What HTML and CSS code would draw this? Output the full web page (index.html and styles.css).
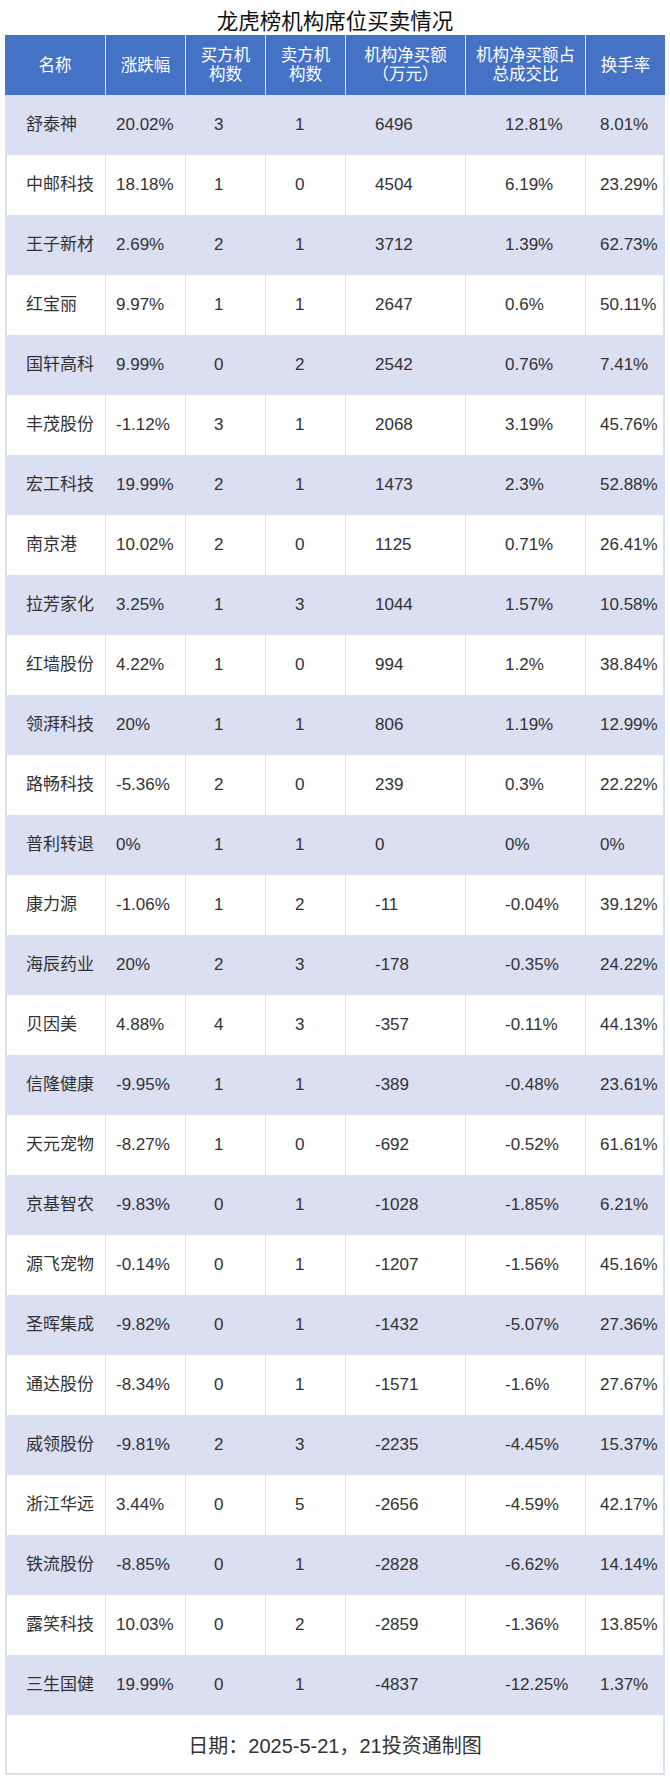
FILE: index.html
```html
<!DOCTYPE html>
<html lang="zh-CN">
<head>
<meta charset="utf-8">
<title>龙虎榜机构席位买卖情况</title>
<link rel="stylesheet" href="styles.css">
</head>
<body>
<div class="sheet">
  <h1 class="title">龙虎榜机构席位买卖情况</h1>
  <table class="grid">
    <thead>
      <tr>
        <th class="c1">名称</th>
        <th class="c2">涨跌幅</th>
        <th class="c3">买方机<br>构数</th>
        <th class="c4">卖方机<br>构数</th>
        <th class="c5">机构净买额<br>（万元）</th>
        <th class="c6">机构净买额占<br>总成交比</th>
        <th class="c7">换手率</th>
      </tr>
    </thead>
    <tbody>
      <tr><td>舒泰神</td><td>20.02%</td><td>3</td><td>1</td><td>6496</td><td>12.81%</td><td>8.01%</td></tr>
      <tr><td>中邮科技</td><td>18.18%</td><td>1</td><td>0</td><td>4504</td><td>6.19%</td><td>23.29%</td></tr>
      <tr><td>王子新材</td><td>2.69%</td><td>2</td><td>1</td><td>3712</td><td>1.39%</td><td>62.73%</td></tr>
      <tr><td>红宝丽</td><td>9.97%</td><td>1</td><td>1</td><td>2647</td><td>0.6%</td><td>50.11%</td></tr>
      <tr><td>国轩高科</td><td>9.99%</td><td>0</td><td>2</td><td>2542</td><td>0.76%</td><td>7.41%</td></tr>
      <tr><td>丰茂股份</td><td>-1.12%</td><td>3</td><td>1</td><td>2068</td><td>3.19%</td><td>45.76%</td></tr>
      <tr><td>宏工科技</td><td>19.99%</td><td>2</td><td>1</td><td>1473</td><td>2.3%</td><td>52.88%</td></tr>
      <tr><td>南京港</td><td>10.02%</td><td>2</td><td>0</td><td>1125</td><td>0.71%</td><td>26.41%</td></tr>
      <tr><td>拉芳家化</td><td>3.25%</td><td>1</td><td>3</td><td>1044</td><td>1.57%</td><td>10.58%</td></tr>
      <tr><td>红墙股份</td><td>4.22%</td><td>1</td><td>0</td><td>994</td><td>1.2%</td><td>38.84%</td></tr>
      <tr><td>领湃科技</td><td>20%</td><td>1</td><td>1</td><td>806</td><td>1.19%</td><td>12.99%</td></tr>
      <tr><td>路畅科技</td><td>-5.36%</td><td>2</td><td>0</td><td>239</td><td>0.3%</td><td>22.22%</td></tr>
      <tr><td>普利转退</td><td>0%</td><td>1</td><td>1</td><td>0</td><td>0%</td><td>0%</td></tr>
      <tr><td>康力源</td><td>-1.06%</td><td>1</td><td>2</td><td>-11</td><td>-0.04%</td><td>39.12%</td></tr>
      <tr><td>海辰药业</td><td>20%</td><td>2</td><td>3</td><td>-178</td><td>-0.35%</td><td>24.22%</td></tr>
      <tr><td>贝因美</td><td>4.88%</td><td>4</td><td>3</td><td>-357</td><td>-0.11%</td><td>44.13%</td></tr>
      <tr><td>信隆健康</td><td>-9.95%</td><td>1</td><td>1</td><td>-389</td><td>-0.48%</td><td>23.61%</td></tr>
      <tr><td>天元宠物</td><td>-8.27%</td><td>1</td><td>0</td><td>-692</td><td>-0.52%</td><td>61.61%</td></tr>
      <tr><td>京基智农</td><td>-9.83%</td><td>0</td><td>1</td><td>-1028</td><td>-1.85%</td><td>6.21%</td></tr>
      <tr><td>源飞宠物</td><td>-0.14%</td><td>0</td><td>1</td><td>-1207</td><td>-1.56%</td><td>45.16%</td></tr>
      <tr><td>圣晖集成</td><td>-9.82%</td><td>0</td><td>1</td><td>-1432</td><td>-5.07%</td><td>27.36%</td></tr>
      <tr><td>通达股份</td><td>-8.34%</td><td>0</td><td>1</td><td>-1571</td><td>-1.6%</td><td>27.67%</td></tr>
      <tr><td>威领股份</td><td>-9.81%</td><td>2</td><td>3</td><td>-2235</td><td>-4.45%</td><td>15.37%</td></tr>
      <tr><td>浙江华远</td><td>3.44%</td><td>0</td><td>5</td><td>-2656</td><td>-4.59%</td><td>42.17%</td></tr>
      <tr><td>铁流股份</td><td>-8.85%</td><td>0</td><td>1</td><td>-2828</td><td>-6.62%</td><td>14.14%</td></tr>
      <tr><td>露笑科技</td><td>10.03%</td><td>0</td><td>2</td><td>-2859</td><td>-1.36%</td><td>13.85%</td></tr>
      <tr><td>三生国健</td><td>19.99%</td><td>0</td><td>1</td><td>-4837</td><td>-12.25%</td><td>1.37%</td></tr>
    </tbody>
    <tfoot>
      <tr><td colspan="7" class="foot">日期：2025-5-21，21投资通制图</td></tr>
    </tfoot>
  </table>
</div>
</body>
</html>
```

FILE: styles.css
```css
html, body {
  margin: 0;
  padding: 0;
  background: #ffffff;
}

body {
  font-family: "Liberation Sans", "Noto Sans CJK SC", sans-serif;
  color: #333333;
}

.sheet {
  width: 660px;
  padding-left: 5px;
}

.title {
  margin: 0;
  height: 35px;
  box-sizing: border-box;
  padding-top: 10px;
  font-size: 21.5px;
  line-height: 25px;
  font-weight: normal;
  color: #111111;
  text-align: center;
}

.grid {
  width: 660px;
  table-layout: fixed;
  border-collapse: separate;
  border-spacing: 0;
}

.grid th,
.grid td {
  box-sizing: border-box;
  height: 60px;
  padding: 0;
  vertical-align: middle;
  white-space: nowrap;
}

.grid th {
  background: #4472c4;
  color: #ffffff;
  font-size: 16.5px;
  line-height: 19px;
  font-weight: normal;
  text-align: center;
  border-right: 1px solid #dde3f5;
}

.grid th:last-child {
  border-right: none;
}

.c1 { width: 101px; }
.c2 { width: 80px; }
.c3 { width: 80px; }
.c4 { width: 80px; }
.c5 { width: 120px; }
.c6 { width: 120px; }
.c7 { width: 79px; }

.grid tbody td {
  font-size: 17px;
  line-height: 20px;
  text-align: left;
  border-right: 1px solid #dadff2;
}

.grid tbody tr:nth-child(odd) td {
  background: #dadff2;
}

.grid tbody tr:nth-child(even) td {
  background: #ffffff;
}

.grid tbody td:nth-child(1) { border-left: 2px solid #dadff2; padding-left: 19px; }
.grid tbody td:nth-child(2) { padding-left: 10px; }
.grid tbody td:nth-child(3) { padding-left: 28px; }
.grid tbody td:nth-child(4) { padding-left: 29px; }
.grid tbody td:nth-child(5) { padding-left: 29px; }
.grid tbody td:nth-child(6) { padding-left: 39px; }
.grid tbody td:nth-child(7) { padding-left: 14px; border-right: 2px solid #dadff2; }

.grid .foot {
  height: 60px;
  font-size: 20px;
  text-align: center;
  background: #ffffff;
  border-left: 2px solid #dadff2;
  border-right: 2px solid #dadff2;
  border-bottom: 2px solid #dadff2;
}
```
